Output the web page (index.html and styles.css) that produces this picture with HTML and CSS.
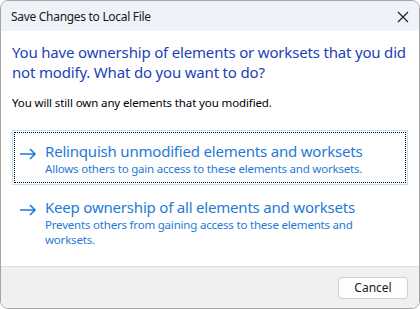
FILE: index.html
```html
<!DOCTYPE html>
<html lang="en">
<head>
    <meta charset="UTF-8">
    <title>Save Changes to Local File</title>
    <link rel="stylesheet" href="styles.css">
</head>
<body>
    <div class="dialog">
        <header class="title-bar">
            <span class="title-text">Save Changes to Local File</span>
            <button class="close-btn" aria-label="Close">
                <svg width="12" height="12" viewBox="0 0 12 12"><path d="M1 1 L11 11 M11 1 L1 11" stroke="#1a1a1a" stroke-width="1.1" fill="none"/></svg>
            </button>
        </header>

        <main class="content">
            <h1 class="main-instruction">You have ownership of elements or worksets that you did not modify. What do you want to do?</h1>
            <p class="note">You will still own any elements that you modified.</p>

            <div class="commands">
                <button class="command-link focused">
                    <span class="arrow">
                        <svg width="18" height="12" viewBox="0 0 18 12"><path d="M1 6 H16 M11 1 L16 6 L11 11" stroke="currentColor" stroke-width="1.6" fill="none"/></svg>
                    </span>
                    <span class="command-text">
                        <span class="command-title">Relinquish unmodified elements and worksets</span>
                        <span class="command-desc">Allows others to gain access to these elements and worksets.</span>
                    </span>
                </button>
                <button class="command-link">
                    <span class="arrow">
                        <svg width="18" height="12" viewBox="0 0 18 12"><path d="M1 6 H16 M11 1 L16 6 L11 11" stroke="currentColor" stroke-width="1.6" fill="none"/></svg>
                    </span>
                    <span class="command-text">
                        <span class="command-title">Keep ownership of all elements and worksets</span>
                        <span class="command-desc">Prevents others from gaining access to these elements and worksets.</span>
                    </span>
                </button>
            </div>
        </main>

        <footer class="footer">
            <button class="cancel-btn">Cancel</button>
        </footer>
    </div>
</body>
</html>
```

FILE: styles.css
```css
/* Dialog global */
body {
    margin: 0;
    background: #ffffff;
    font-family: 'Noto Sans', sans-serif;
}

.dialog {
    width: 420px;
    height: 309px;
    box-sizing: border-box;
    border: 1px solid #a6a6a6;
    border-radius: 8px;
    overflow: hidden;
    display: flex;
    flex-direction: column;
    background: #ffffff;
}

/* Title bar */
.title-bar {
    height: 30px;
    background: #eef2f9;
    display: flex;
    align-items: center;
    justify-content: space-between;
    padding: 0 8px 0 10px;
    flex-shrink: 0;
}

.title-text {
    font-size: 12px;
    color: #1a1a1a;
    letter-spacing: -0.3px;
}

.close-btn {
    background: none;
    border: none;
    padding: 0;
    width: 16px;
    height: 16px;
    display: flex;
    align-items: center;
    justify-content: center;
    margin-top: 1px;
}

/* Content */
.content {
    flex: 1;
    padding: 11px 11px 0 11px;
}

.main-instruction {
    margin: 0;
    font-size: 15px;
    font-weight: 400;
    line-height: 20px;
    color: #1c3fb7;
    letter-spacing: -0.18px;
}

.note {
    margin: 13px 0 0 0;
    font-size: 11.5px;
    line-height: 16px;
    color: #000000;
    letter-spacing: -0.12px;
}

.commands {
    margin-top: 19px;
    display: flex;
    flex-direction: column;
    gap: 1px;
}

.command-link {
    display: flex;
    align-items: flex-start;
    text-align: left;
    background: #ffffff;
    border: 1px solid transparent;
    padding: 10px 8px 8px 6px;
    font-family: inherit;
    color: #1e7ad8;
    position: relative;
}

.command-link.focused {
    border-color: #bcdcf4;
}

.command-link.focused::after {
    content: "";
    position: absolute;
    inset: 1px;
    border: 1px dotted #000000;
}

.arrow {
    width: 26px;
    flex-shrink: 0;
    padding-top: 5px;
    color: #1e7ad8;
}

.command-text {
    display: flex;
    flex-direction: column;
}

.command-title {
    font-size: 15px;
    line-height: 20px;
    letter-spacing: -0.2px;
}

.command-desc {
    font-size: 11.5px;
    line-height: 15px;
    letter-spacing: -0.2px;
}

/* Footer */
.footer {
    height: 41px;
    flex-shrink: 0;
    background: #f0f0f0;
    border-top: 1px solid #dfdfdf;
    display: flex;
    align-items: center;
    justify-content: flex-end;
    padding: 0 11px;
}

.cancel-btn {
    width: 70px;
    height: 22px;
    background: #fdfdfd;
    border: 1px solid #d0d0d0;
    border-radius: 4px;
    font-family: inherit;
    font-size: 12px;
    color: #1a1a1a;
    padding: 0;
}
```
